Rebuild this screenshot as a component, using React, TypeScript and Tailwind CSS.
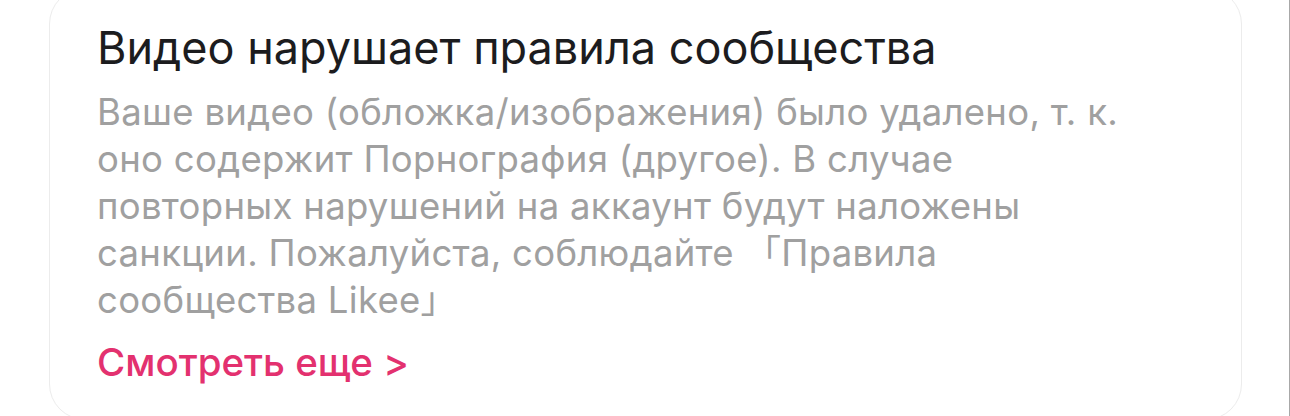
import React from 'react';

const lines = [
  'Ваше видео (обложка/изображения) было удалено, т. к.',
  'оно содержит Порнография (другое). В случае',
  'повторных нарушений на аккаунт будут наложены',
  'санкции. Пожалуйста, соблюдайте 「Правила',
  'сообщества Likee」',
];

export default function App() {
  return (
    <div className="h-[416px] w-[1290px] overflow-hidden border-r border-[#a8a8a8] bg-white font-['Inter','Noto_Sans_CJK_SC',sans-serif]">
      <div className="-mt-[12px] ml-[49px] h-[432px] w-[1193px] rounded-[36px] border border-[#ececec] bg-white px-[47px] pt-[31px]">
        <h2 className="text-[45px] font-normal leading-[56px] text-[#1c1c1e]">
          Видео нарушает правила сообщества
        </h2>
        <p className="mt-[13px] text-[36.5px] leading-[47px] tracking-[0.3px] text-[#a0a0a0]">
          {lines.map((line) => (
            <span key={line} className="block whitespace-nowrap">
              {line}
            </span>
          ))}
        </p>
        <button className="mt-[16px] block text-[38.5px] font-medium leading-[44px] text-[#e3316f]">
          Смотреть еще &gt;
        </button>
      </div>
    </div>
  );
}
